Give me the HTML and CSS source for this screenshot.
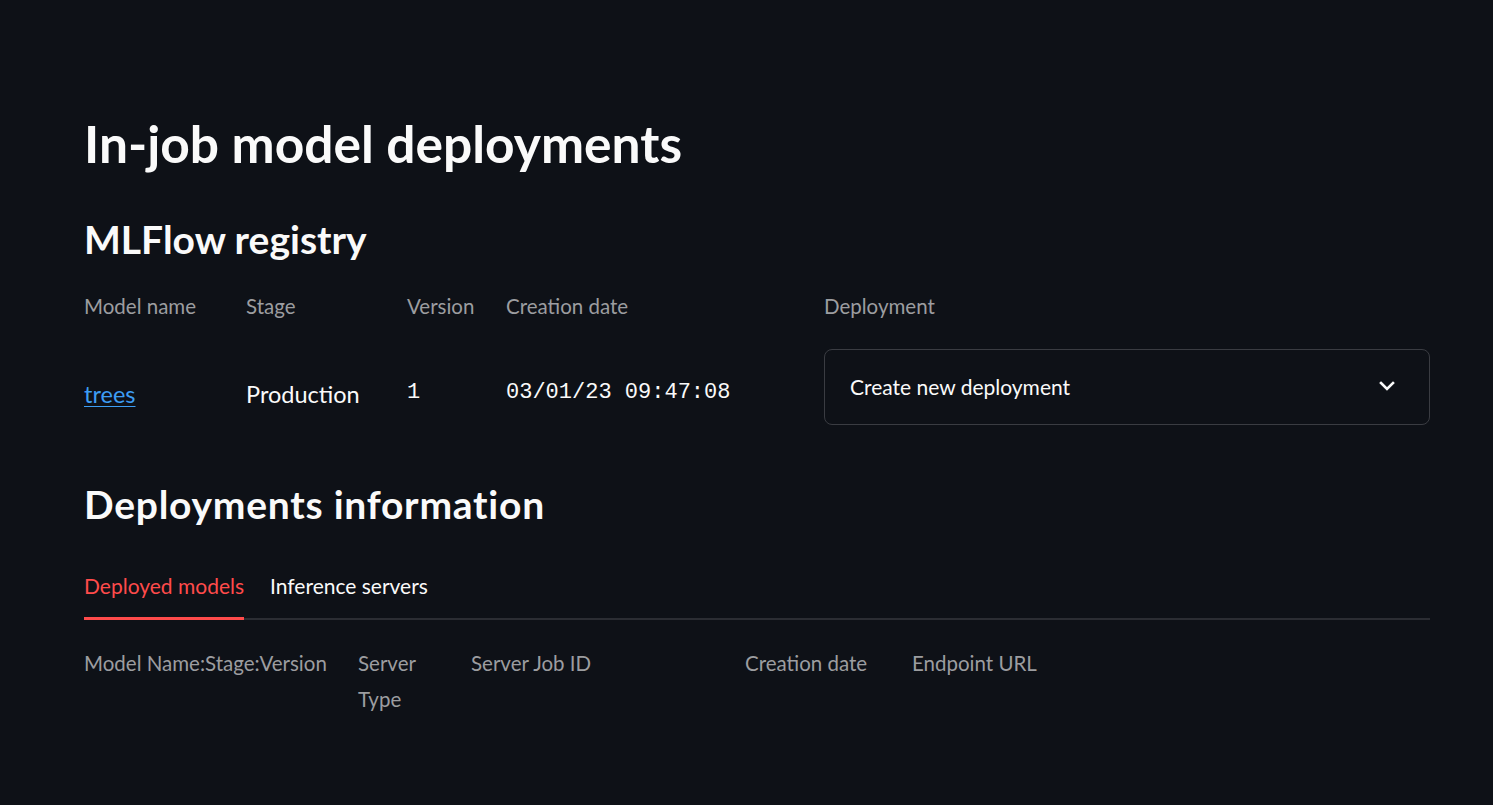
FILE: index.html
```html
<!DOCTYPE html>
<html lang="en">
<head>
<meta charset="utf-8">
<title>In-job model deployments</title>
<link rel="stylesheet" href="styles.css">
</head>
<body>
<main class="page">
  <h1 class="title">In-job model deployments</h1>
  <h2 class="heading registry-heading">MLFlow registry</h2>

  <div class="registry">
    <div class="label">Model name</div>
    <div class="label">Stage</div>
    <div class="label">Version</div>
    <div class="label">Creation date</div>
    <div class="label">Deployment</div>

    <div class="cell"><a class="link" href="#">trees</a></div>
    <div class="cell">Production</div>
    <div class="cell mono">1</div>
    <div class="cell mono">03/01/23 09:47:08</div>
    <div class="select-cell">
      <div class="select">
        <span class="select-text">Create new deployment</span>
        <svg class="chevron" width="16" height="10" viewBox="0 0 16 10" aria-hidden="true">
          <path d="M2 2 L8 8 L14 2" fill="none" stroke="#fafafa" stroke-width="2.6" stroke-linecap="square"/>
        </svg>
      </div>
    </div>
  </div>

  <h2 class="heading deploy-heading">Deployments information</h2>

  <div class="tabs">
    <div class="tab active">Deployed models</div>
    <div class="tab">Inference servers</div>
  </div>

  <div class="deployed">
    <div class="label">Model Name:Stage:Version</div>
    <div class="label">Server Type</div>
    <div class="label">Server Job ID</div>
    <div class="label">Creation date</div>
    <div class="label">Endpoint URL</div>
  </div>
</main>
</body>
</html>
```

FILE: styles.css
```css
html, body {
  margin: 0;
  padding: 0;
  background: #0e1117;
}

body {
  color: #fafafa;
  font-family: Lato, "Open Sans", sans-serif;
  min-height: 805px;
}

.page {
  padding: 113px 63px 0 84px;
}

.title {
  margin: 0;
  font-size: 51.5px;
  line-height: 1.2;
  font-weight: 700;
}

.heading {
  margin: 0;
  font-size: 39px;
  line-height: 1.2;
  font-weight: 700;
}

.registry-heading {
  margin-top: 41px;
}

.registry {
  margin-top: 25px;
  display: grid;
  grid-template-columns: 162px 161px 99px 318px 1fr;
  row-gap: 25px;
}

.label {
  color: #9c9da0;
  font-size: 20.5px;
  line-height: 36px;
  padding-right: 22px;
}

.cell {
  padding-top: 31px;
  font-size: 23.5px;
  line-height: 28px;
}

.link {
  color: #3d9df3;
  text-decoration: underline;
  text-underline-offset: 3px;
  text-decoration-thickness: 1px;
}

.mono {
  font-family: "Liberation Mono", monospace;
  font-size: 22px;
  line-height: 28px;
  padding-top: 30px;
}

.select {
  height: 74px;
  border: 1px solid #3a3c42;
  border-radius: 8px;
  display: flex;
  align-items: center;
  justify-content: space-between;
  padding: 0 34px 0 25px;
}

.select-text {
  font-size: 21px;
  line-height: 28px;
}

.chevron {
  display: block;
  margin-top: -2px;
}

.deploy-heading {
  margin-top: 56px;
  letter-spacing: 0.75px;
}

.tabs {
  margin-top: 46px;
  display: flex;
  gap: 26px;
  border-bottom: 2px solid #2b2d33;
}

.tab {
  font-size: 21px;
  line-height: 25px;
  padding-bottom: 19px;
  margin-bottom: -2px;
  border-bottom: 3px solid transparent;
}

.tab.active {
  color: #ff4b4b;
  border-bottom-color: #ff4b4b;
}

.deployed {
  margin-top: 25px;
  display: grid;
  grid-template-columns: 274px 113px 274px 167px 1fr;
}
```
